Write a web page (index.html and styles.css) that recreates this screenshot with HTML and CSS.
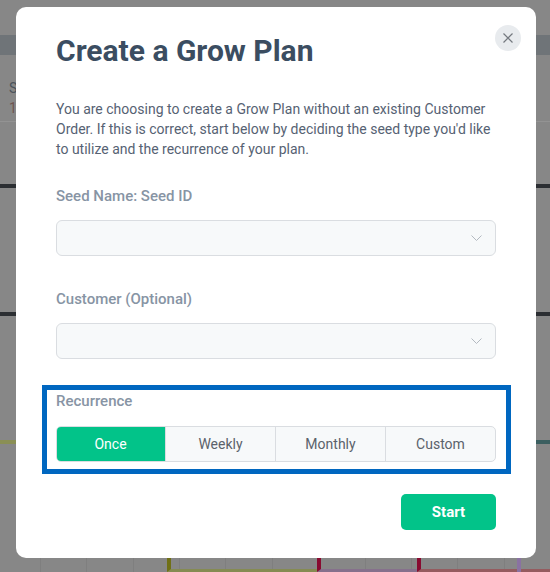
FILE: index.html
```html
<!DOCTYPE html>
<html lang="en">
<head>
<meta charset="utf-8">
<title>Create a Grow Plan</title>
<link rel="stylesheet" href="styles.css">
</head>
<body>
<div class="page">
  <div class="top-space"></div>
  <div class="header-band"></div>
  <div class="table-head">
    <div class="cell-s">S</div>
    <div class="cell-1">1</div>
  </div>
  <div class="row-gap r1"></div>
  <div class="dark-line"></div>
  <div class="row-gap r2"></div>
  <div class="dark-line"></div>
  <div class="row-gap r3"></div>
  <div class="color-line">
    <span class="seg-olive"></span>
    <span class="seg-teal"></span>
  </div>
  <div class="gantt">
    <div class="grid">
      <span></span><span></span><span></span><span></span><span></span><span></span><span></span><span></span><span></span><span></span><span></span>
    </div>
    <div class="bars">
      <span class="bar-pad"></span>
      <span class="bar olive"></span>
      <span class="bar purple"></span>
      <span class="bar red"></span>
    </div>
  </div>
</div>

<div class="modal" role="dialog" aria-labelledby="modal-title">
  <button class="close" aria-label="Close">
    <svg width="12" height="12" viewBox="0 0 12 12"><path d="M1.5 1.5 L10.5 10.5 M10.5 1.5 L1.5 10.5" stroke="#74797f" stroke-width="1.2" fill="none"/></svg>
  </button>
  <h1 id="modal-title" class="title">Create a Grow Plan</h1>
  <p class="intro">You are choosing to create a Grow Plan without an existing Customer Order. If this is correct, start below by deciding the seed type you'd like to utilize and the recurrence of your plan.</p>

  <label class="label l1">Seed Name: Seed ID</label>
  <div class="select">
    <svg class="chev" width="11" height="6" viewBox="0 0 11 6"><path d="M0.5 0.5 L5.5 5.5 L10.5 0.5" stroke="#b3b9c0" stroke-width="1" fill="none"/></svg>
  </div>

  <label class="label l2">Customer (Optional)</label>
  <div class="select">
    <svg class="chev" width="11" height="6" viewBox="0 0 11 6"><path d="M0.5 0.5 L5.5 5.5 L10.5 0.5" stroke="#b3b9c0" stroke-width="1" fill="none"/></svg>
  </div>

  <div class="highlight">
    <div class="label l3">Recurrence</div>
    <div class="segmented">
      <button class="opt active">Once</button>
      <button class="opt">Weekly</button>
      <button class="opt">Monthly</button>
      <button class="opt">Custom</button>
    </div>
  </div>

  <div class="actions">
    <button class="start">Start</button>
  </div>
</div>
</body>
</html>
```

FILE: styles.css
```css
* { box-sizing: border-box; }

html, body {
  margin: 0;
  padding: 0;
  width: 550px;
  height: 572px;
  overflow: hidden;
}

body {
  background: #878787;
  font-family: Roboto, "Liberation Sans", sans-serif;
}

/* background page (dimmed) */
.page {
  display: flex;
  flex-direction: column;
  height: 572px;
}
.top-space { height: 35px; }
.header-band { height: 20px; background: #6f7478; }
.table-head {
  height: 67px;
  border-bottom: 1px solid #939393;
  padding: 23px 0 0 9px;
  font-size: 14px;
  line-height: 20px;
}
.cell-s { color: #4c535b; }
.cell-1 { color: #6e5550; }
.row-gap.r1 { height: 62px; }
.row-gap.r2 { height: 124px; }
.row-gap.r3 { height: 124px; }
.dark-line { height: 4px; background: #2b2e32; }
.color-line { height: 4px; display: flex; }
.seg-olive { flex: 1; background: #8a8f55; }
.seg-teal { flex: 1; background: #3c5f60; }

.gantt {
  flex: 1;
  position: relative;
}
.grid {
  display: flex;
  height: 100%;
  padding-left: 40px;
}
.grid span {
  width: 50px;
  border-left: 1px solid #7f7f7f;
}
.bars {
  position: absolute;
  left: 0; right: 0; bottom: 0;
  height: 15px;
  display: flex;
  align-items: stretch;
}
.bar-pad { width: 167px; }
.bar { border-left: 4px solid; border-bottom: 3px solid; }
.bar.olive { width: 150px; border-left-color: #707016; border-bottom-color: #858b52; }
.bar.purple { width: 100px; border-left-color: #880a30; border-bottom-color: #86708c; }
.bar.red { flex: 1; border-left-color: #880a30; border-bottom-color: #955b5f; position: relative; }
.bar.red::after {
  content: "";
  position: absolute;
  left: 96px; top: 0; bottom: -3px;
  width: 4px;
  background: #8a72a2;
}

/* modal */
.modal {
  position: fixed;
  left: 16px;
  top: 7px;
  width: 520px;
  height: 551px;
  background: #ffffff;
  border-radius: 10px;
  padding: 24px 40px 0 40px;
  display: flex;
  flex-direction: column;
}

.close {
  position: absolute;
  right: 15px;
  top: 18px;
  width: 26px;
  height: 26px;
  border-radius: 50%;
  border: none;
  background: #e8ebee;
  padding: 0;
  display: flex;
  align-items: center;
  justify-content: center;
}

.title {
  margin: 0;
  font-size: 30px;
  line-height: 40px;
  font-weight: 700;
  color: #3b4d61;
}

.intro {
  margin: 28px 0 0 0;
  font-size: 14px;
  line-height: 20px;
  color: #566273;
}

.label {
  display: block;
  font-size: 15px;
  line-height: 20px;
  font-weight: 500;
  color: #8794a4;
}
.l1 { margin-top: 27px; }
.l2 { margin-top: 33px; }

.select {
  margin-top: 14px;
  height: 36px;
  border: 1px solid #dadde1;
  border-radius: 6px;
  background: #f7f9fa;
  display: flex;
  align-items: center;
  justify-content: flex-end;
  padding-right: 13px;
}
.chev { display: block; }

.highlight {
  margin: 26px -15px 0 -14px;
  border: 5px solid #0067c0;
  padding: 1px 10px 7px 9px;
}

.segmented {
  margin-top: 15px;
  display: flex;
  height: 36px;
  border: 1px solid #dadde1;
  border-radius: 5px;
  background: #f7f9fa;
  overflow: hidden;
}
.opt {
  flex: 1;
  border: none;
  border-left: 1px solid #dadde1;
  background: transparent;
  font-family: Roboto, "Liberation Sans", sans-serif;
  font-size: 14px;
  color: #5b626b;
  padding: 0;
}
.opt:first-child { border-left: none; }
.opt.active {
  background: #02c389;
  color: #ffffff;
  margin: -1px 0 -1px -1px;
}

.actions {
  margin-top: 20px;
  display: flex;
  justify-content: flex-end;
}
.start {
  width: 95px;
  height: 36px;
  border: none;
  border-radius: 5px;
  background: #02c389;
  color: #ffffff;
  font-family: Roboto, "Liberation Sans", sans-serif;
  font-size: 15px;
  font-weight: 700;
}
```
